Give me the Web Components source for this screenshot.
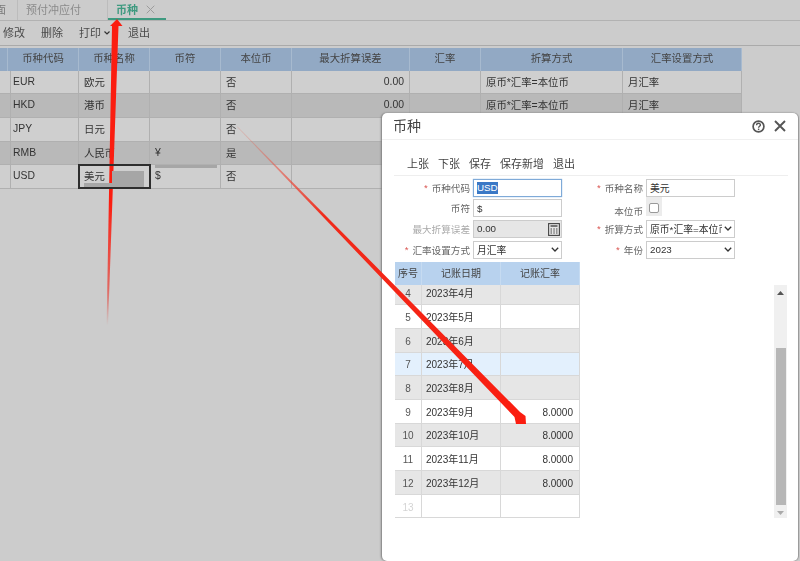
<!DOCTYPE html>
<html lang="zh">
<head>
<meta charset="utf-8">
<title>币种</title>
<style>
    html, body { margin: 0; height: 100%; }
    body {
        background: #ccc;
        overflow: hidden;
        color: #333;
        font-family: "Liberation Sans", "Noto Sans CJK SC", sans-serif;
    }
</style>
</head>
<body>
<x-app>
    <x-tab-bar>
        <x-tab clip>面</x-tab>
        <x-tab>预付冲应付</x-tab>
        <x-tab active>币种</x-tab>
    </x-tab-bar>
    <x-tool-bar>
        <x-tool-button>修改</x-tool-button>
        <x-tool-button>删除</x-tool-button>
        <x-tool-button menu>打印</x-tool-button>
        <x-tool-button>退出</x-tool-button>
    </x-tool-bar>
    <x-data-grid id="currencies"></x-data-grid>

    <x-dialog title="币种">
        <x-dialog-bar>
            <x-tool-button>上张</x-tool-button>
            <x-tool-button>下张</x-tool-button>
            <x-tool-button>保存</x-tool-button>
            <x-tool-button>保存新增</x-tool-button>
            <x-tool-button>退出</x-tool-button>
        </x-dialog-bar>
        <x-form-grid>
            <x-field label="币种代码" required focused><x-selected>USD</x-selected></x-field>
            <x-field label="币种名称" required>美元</x-field>
            <x-field label="币符">$</x-field>
            <x-field label="本位币" kind="check"></x-field>
            <x-field label="最大折算误差" kind="calc">0.00</x-field>
            <x-field label="折算方式" required kind="select">原币*汇率=本位币</x-field>
            <x-field label="汇率设置方式" required kind="select">月汇率</x-field>
            <x-field label="年份" required kind="select">2023</x-field>
        </x-form-grid>
        <x-rate-panel>
            <x-data-grid id="rates"></x-data-grid>
            <x-scroll-bar></x-scroll-bar>
        </x-rate-panel>
    </x-dialog>

    <x-annotations></x-annotations>
</x-app>

<script>
class XApp extends HTMLElement {
    constructor() {
        super();
        this.attachShadow({ mode: 'open' }).innerHTML = `
        <style>
            :host { display: block; width: 800px; height: 561px; position: relative; overflow: hidden; filter: blur(.35px); }
        </style>
        <slot></slot>`;
    }
}

class XTabBar extends HTMLElement {
    constructor() {
        super();
        this.attachShadow({ mode: 'open' }).innerHTML = `
        <style>
            :host { display: flex; height: 20px; border-bottom: 1px solid #b2b2b2; box-sizing: content-box; overflow: hidden; }
        </style>
        <slot></slot>`;
    }
}

class XTab extends HTMLElement {
    constructor() {
        super();
        const active = this.hasAttribute('active');
        this.attachShadow({ mode: 'open' }).innerHTML = `
        <style>
            :host {
                display: flex; align-items: center; height: 18px; padding: 0 26px 2px 8px;
                font-size: 11px; color: #8a8a8a; border-right: 1px solid #bcbcbc; box-sizing: content-box;
            }
            :host([clip]) { margin-left: -6px; padding: 0 11px 2px 1px; width: 11px; color: #7a7a7a; }
            :host([active]) {
                width: 50px; padding: 0 0 0 8px; height: 18px; border: 0; border-bottom: 2px solid #3f9a80;
                color: #3f9a80; font-weight: bold; gap: 8px;
            }
            svg { width: 9px; height: 9px; }
        </style>
        <slot></slot>
        ${active ? '<svg viewBox="0 0 9 9"><path d="M.7.7l7.6 7.6M8.3.7L.7 8.3" stroke="#9c9c9c" fill="none"/></svg>' : ''}`;
    }
}

class XToolBar extends HTMLElement {
    constructor() {
        super();
        this.attachShadow({ mode: 'open' }).innerHTML = `
        <style>
            :host { display: flex; align-items: center; gap: 16px; height: 24px; padding-left: 3px; border-bottom: 1px solid #aaa; color: #4a4a4a; }
        </style>
        <slot></slot>`;
    }
}

class XToolButton extends HTMLElement {
    constructor() {
        super();
        const menu = this.hasAttribute('menu');
        this.attachShadow({ mode: 'open' }).innerHTML = `
        <style>
            :host { display: inline-flex; align-items: center; gap: 3px; font-size: 11px; line-height: 14px; }
            svg { width: 6px; height: 4px; margin-right: 2px; }
        </style>
        <slot></slot>
        ${menu ? '<svg viewBox="0 0 6 4"><path d="M.5.5L3 3 5.5.5" stroke="#333" stroke-width="1.2" fill="none"/></svg>' : ''}`;
    }
}

class XDataGrid extends HTMLElement {
    constructor() {
        super();
        this.shadowDOM = this.attachShadow({ mode: 'open' });
    }

    set config(config) {
        this._config = config;
        this.render();
    }

    render() {
        const { columns, rows, template, head, line, stripe, font, bodyHeight, offset, pad, textLift } = this._config;
        const rowHtml = rows.map(row => {
            const cells = columns.map((col, i) => {
                const cell = row.cells[i] === undefined ? '' : row.cells[i];
                return `<div class="cell ${col.align || ''} ${(row.classes && row.classes[i]) || ''}">${cell}</div>`;
            }).join('');
            return `<div class="row ${row.type || ''}">${cells}</div>`;
        }).join('');
        this.shadowDOM.innerHTML = `
        <style>
            :host { display: block; margin-top: var(--grid-top, 1.7px); font-size: ${font}; width: var(--grid-width); box-sizing: border-box; }
            .row, .head { display: grid; grid-template-columns: ${template}; }
            .head { height: 23px; background: ${head}; }
            .head div {
                display: flex; align-items: center; justify-content: center; padding-bottom: 2.5px; box-sizing: border-box;
                border-right: 1px solid rgba(255,255,255,.2); color: #444;
            }
            .body { height: ${bodyHeight}; overflow: hidden; }
            .inner { margin-top: ${offset}; }
            .row { height: 23.7px; box-sizing: border-box; border-bottom: 1px solid ${line}; background: ${stripe[0]}; }
            .row.alt { background: ${stripe[1]}; }
            .row.hover { background: #e3f0fd; }
            .cell {
                display: flex; align-items: center; padding: 0 ${pad} ${textLift} ${pad === '5px' ? '5px' : '4px'}; box-sizing: border-box; position: relative;
                border-right: 1px solid ${line}; white-space: nowrap; color: #333;
            }
            .right { justify-content: flex-end; }
            .center { justify-content: center; padding-left: 0; padding-right: 0; color: #555; }
            .digits { padding-top: 2px; }
            .faint { color: #d4d4d4; }
            .picked { outline: 2px solid #2e2e2e; outline-offset: -1.5px; z-index: 1; }
            .blot { position: absolute; background: #a6a6a6; }
        </style>
        <div class="head">${columns.map(col => `<div>${col.title}</div>`).join('')}</div>
        <div class="body"><div class="inner">${rowHtml}</div></div>`;
    }
}

class XDialog extends HTMLElement {
    constructor() {
        super();
        const title = this.getAttribute('title');
        this.attachShadow({ mode: 'open' }).innerHTML = `
        <style>
            :host {
                position: absolute; left: 382px; top: 113px; width: 416px; height: 448px; box-sizing: border-box;
                background: #fff; border-radius: 5px; box-shadow: -1px 0 2px #7d7d7d, 1px 0 1px #9a9a9a;
                display: flex; flex-direction: column;
            }
            header {
                display: flex; align-items: center; height: 26px; padding: 0 12px 0 11px; flex: none; box-sizing: content-box;
                border-bottom: 1px solid #f0f0f0; font-size: 14px; color: #444;
            }
            h2 { margin: 0 0 2px; font: inherit; flex: 1; }
            .close { margin-left: 9px; }
            svg { display: block; }
        </style>
        <header>
            <h2>${title}</h2>
            <svg width="13" height="13" viewBox="0 0 13 13"><circle cx="6.5" cy="6.5" r="5.4" fill="none" stroke="#555" stroke-width="1.7"/><path d="M4.6 5.2c0-2.5 3.8-2.5 3.8-.2 0 1.3-1.8 1.3-1.8 2.7" fill="none" stroke="#555" stroke-width="1.4"/><rect x="5.9" y="8.6" width="1.4" height="1.5" fill="#555"/></svg>
            <svg class="close" width="12" height="12" viewBox="0 0 12 12"><path d="M1 1l10 10M11 1L1 11" stroke="#555" stroke-width="1.9" fill="none"/></svg>
        </header>
        <slot></slot>`;
    }
}

class XDialogBar extends HTMLElement {
    constructor() {
        super();
        this.attachShadow({ mode: 'open' }).innerHTML = `
        <style>
            :host {
                display: flex; align-items: flex-end; gap: 9px; height: 31px; padding: 0 0 4px 13px; margin: 0 10px 0 12px;
                border-bottom: 1.5px solid #eee; color: #444; box-sizing: content-box; flex: none;
            }
        </style>
        <slot></slot>`;
    }
}

class XFormGrid extends HTMLElement {
    constructor() {
        super();
        this.attachShadow({ mode: 'open' }).innerHTML = `
        <style>
            :host {
                display: grid; grid-template-columns: 180px 173px; grid-auto-rows: 18px; row-gap: 2.7px;
                margin-top: 2.5px; flex: none;
            }
        </style>
        <slot></slot>`;
    }
}

class XField extends HTMLElement {
    constructor() {
        super();
        const kind = this.getAttribute('kind') || 'text';
        const required = this.hasAttribute('required');
        const chevron = '<svg class="icon chev" viewBox="0 0 8 5"><path d="M.8.8L4 4 7.2.8" stroke="#333" stroke-width="1.3" fill="none"/></svg>';
        const calc = '<svg class="icon calc" viewBox="0 0 12 13"><rect x=".6" y=".6" width="10.8" height="11.8" fill="none" stroke="#444" stroke-width="1.1"/><path d="M2.5 3h7" stroke="#444" stroke-width="1.4"/><path d="M2.5 6h1.5M5.3 6h1.5M8 6h1.5M2.5 8h1.5M5.3 8h1.5M8 8h1.5M2.5 10h1.5M5.3 10h1.5M8 10h1.5" stroke="#444"/></svg>';
        const box = kind === 'check'
            ? '<div class="check"><i></i></div>'
            : `<div class="box ${kind}"><span><slot></slot></span>${kind === 'select' ? chevron : ''}${kind === 'calc' ? calc : ''}</div>`;
        this.attachShadow({ mode: 'open' }).innerHTML = `
        <style>
            :host { display: grid; grid-template-columns: 1fr 89px; column-gap: 3px; font-size: 10px; }
            label { display: flex; justify-content: flex-end; align-items: center; color: #666; white-space: nowrap; font-size: 9.6px; gap: 4px; }
            :host([kind="calc"]) label { color: #aaa; }
            :host([kind="check"]) label { padding-top: 5px; }
            b { color: #d9534f; font-weight: normal; }
            .box {
                display: flex; align-items: center; height: 18px; box-sizing: border-box; padding: 0 3px;
                border: 1px solid #ccc; background: #fff; color: #333; position: relative; overflow: hidden; white-space: nowrap; font-size: 9.8px;
            }
            :host([focused]) .box { border-color: #7faad8; box-shadow: 0 0 1px #7faad8; }
            .box.calc { background: #e6e6e6; }
            .box.select { padding-right: 12px; }
            .box.select span { overflow: hidden; }
            .icon { position: absolute; }
            .chev { right: 2px; top: 5px; width: 8px; height: 5px; }
            svg.calc { right: 1px; top: 2px; width: 12px; height: 13px; }
            .check { width: 16px; height: 19px; background: #ececec; display: flex; justify-content: center; margin-top: -2px; }
            .check i { width: 8px; height: 8px; margin-top: 6px; border: 1px solid #999; border-radius: 2px; background: #fff; }
        </style>
        <label>${required ? '<b>*</b>' : ''}<span>${this.getAttribute('label')}</span></label>
        ${box}`;
    }
}

class XSelected extends HTMLElement {
    constructor() {
        super();
        this.attachShadow({ mode: 'open' }).innerHTML = `
        <style>
            :host { display: inline-block; background: #3a78c6; color: #fff; line-height: 12px; }
        </style>
        <slot></slot>`;
    }
}

class XRatePanel extends HTMLElement {
    constructor() {
        super();
        this.attachShadow({ mode: 'open' }).innerHTML = `
        <style>
            :host { display: flex; align-items: flex-start; justify-content: space-between; padding: 0 11px 0 13px; margin-top: 3.6px; --grid-top: 0; --grid-width: 185px; }
        </style>
        <slot></slot>`;
    }
}

class XScrollBar extends HTMLElement {
    constructor() {
        super();
        this.attachShadow({ mode: 'open' }).innerHTML = `
        <style>
            :host {
                display: flex; flex-direction: column; align-items: center; width: 13px; height: 233px; margin-top: 23px;
                background: #f0f0f0;
            }
            svg { flex: none; margin-top: 6px; }
            .thumb { width: 10px; height: 157px; background: #b7b7b7; margin-top: 53px; }
        </style>
        <svg width="7" height="4" viewBox="0 0 7 4"><path d="M3.5 0L7 4H0z" fill="#555"/></svg>
        <div class="thumb"></div>
        <svg width="7" height="4" viewBox="0 0 7 4"><path d="M3.5 4L7 0H0z" fill="#aaa"/></svg>`;
    }
}

class XAnnotations extends HTMLElement {
    constructor() {
        super();
        this.attachShadow({ mode: 'open' }).innerHTML = `
        <style>
            :host { position: absolute; inset: 0; pointer-events: none; }
            svg { display: block; }
        </style>
        <svg width="800" height="561" viewBox="0 0 800 561">
            <defs>
                <linearGradient id="up" x1="0" y1="325" x2="0" y2="18" gradientUnits="userSpaceOnUse">
                    <stop offset="0" stop-color="#e03a30" stop-opacity="0"/>
                    <stop offset=".12" stop-color="#e8433a" stop-opacity=".75"/>
                    <stop offset=".4" stop-color="#fb1d10"/>
                    <stop offset="1" stop-color="#fb1d10"/>
                </linearGradient>
                <linearGradient id="down" x1="237" y1="127" x2="526" y2="424" gradientUnits="userSpaceOnUse">
                    <stop offset="0" stop-color="#e5705f" stop-opacity=".2"/>
                    <stop offset=".3" stop-color="#f02a1a"/>
                    <stop offset="1" stop-color="#fb1d10"/>
                </linearGradient>
            </defs>
            <polygon fill="url(#up)" points="117,19 122.5,26 118.5,26 108,326 106.6,326 112,26 110,26"/>
            <polygon fill="url(#down)" points="237,127 237.6,126.6 520,412 525.5,416 526,424 516,424 514.5,417"/>
        </svg>`;
    }
}

customElements.define('x-app', XApp);
customElements.define('x-tab-bar', XTabBar);
customElements.define('x-tab', XTab);
customElements.define('x-tool-bar', XToolBar);
customElements.define('x-tool-button', XToolButton);
customElements.define('x-data-grid', XDataGrid);
customElements.define('x-dialog', XDialog);
customElements.define('x-dialog-bar', XDialogBar);
customElements.define('x-form-grid', XFormGrid);
customElements.define('x-field', XField);
customElements.define('x-selected', XSelected);
customElements.define('x-rate-panel', XRatePanel);
customElements.define('x-scroll-bar', XScrollBar);
customElements.define('x-annotations', XAnnotations);

const rule = '原币*汇率=本位币';
const currencyRows = [
    ['EUR', '欧元', '', '否'],
    ['HKD', '港币', '', '否'],
    ['JPY', '日元', '', '否'],
    ['RMB', '人民币', '¥', '是'],
    ['USD', '美元', '$', '否']
];

const currencies = document.getElementById('currencies');
currencies.style.setProperty('--grid-width', '742px');
currencies.config = {
    template: '8px 71px 71px 71px 71px 118px 71px 142px 119px',
    head: '#92a9c4',
    line: '#b0b0b0',
    stripe: ['#cfcfcf', '#b9b9b9'],
    font: '10.4px',
    bodyHeight: 'auto',
    offset: '0',
    pad: '5px',
    textLift: '2px',
    columns: [
        { title: '' },
        { title: '币种代码' },
        { title: '币种名称' },
        { title: '币符' },
        { title: '本位币' },
        { title: '最大折算误差', align: 'right' },
        { title: '汇率' },
        { title: '折算方式' },
        { title: '汇率设置方式' }
    ],
    // the last three rows run under the dialog from the 最大折算误差 column on
    rows: currencyRows.map((r, i) => ({
        type: i % 2 ? 'alt' : '',
        classes: i === 4 ? { 2: 'picked' } : {},
        cells: [
            '', r[0],
            i === 4 ? '美元<span class="blot" style="left:33px;top:6px;width:32px;height:15px"></span><span class="blot" style="left:5px;top:18px;width:60px;height:4px"></span>' : r[1],
            i === 4 ? '$<span class="blot" style="left:5px;top:0;width:62px;height:3px"></span>' : r[2],
            r[3],
            i < 2 ? '0.00' : '', '',
            i < 2 ? rule : '',
            i < 2 ? '月汇率' : ''
        ]
    }))
};

const rates = document.getElementById('rates');
const rateRows = [];
for (let n = 4; n <= 13; n++) {
    rateRows.push({
        type: n === 7 ? 'hover' : (n < 13 && n % 2 === 0 ? 'alt' : ''),
        classes: { 0: n === 13 ? 'faint' : '' },
        cells: [n, n < 13 ? `2023年${n}月` : '', n >= 9 && n < 13 ? '8.0000' : '']
    });
}
rates.config = {
    template: '27px 79px 79px',
    head: '#b8d2ee',
    line: '#d8d8d8',
    stripe: ['#ffffff', '#e6e6e6'],
    font: '10px',
    bodyHeight: '233px',
    offset: '-3.7px',
    pad: '6px',
    textLift: '0',
    columns: [
        { title: '序号', align: 'center digits' },
        { title: '记账日期' },
        { title: '记账汇率', align: 'right digits' }
    ],
    rows: rateRows
};
</script>
</body>
</html>
